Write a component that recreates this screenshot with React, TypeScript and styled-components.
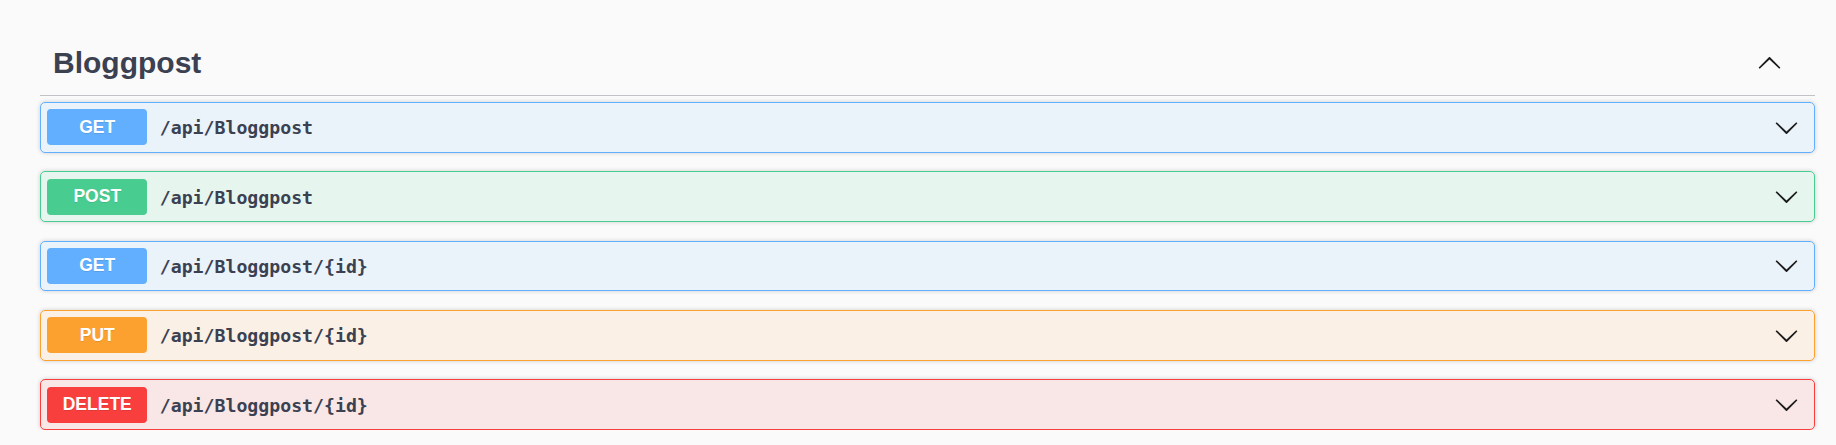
import React from "react";
import styled, { createGlobalStyle } from "styled-components";

const GlobalStyle = createGlobalStyle`
  html, body {
    margin: 0;
    padding: 0;
    background: #fafafa;
  }
  * { box-sizing: border-box; }
`;

type Method = "get" | "post" | "put" | "delete";

const palette: Record<Method, { main: string; bg: string }> = {
  get: { main: "#61affe", bg: "rgba(97,175,254,0.1)" },
  post: { main: "#49cc90", bg: "rgba(73,204,144,0.1)" },
  put: { main: "#fca130", bg: "rgba(252,161,48,0.1)" },
  delete: { main: "#f93e3e", bg: "rgba(249,62,62,0.1)" },
};

const Page = styled.div`
  padding: 0 21px 0 40px;
  font-family: "Liberation Sans", Arial, sans-serif;
  color: #3b4151;
`;

const TagHeader = styled.div`
  display: flex;
  align-items: center;
  padding: 48px 32.6px 16.7px 13px;
  border-bottom: 1px solid rgba(59, 65, 81, 0.3);
  margin-bottom: 6.3px;
`;

const TagTitle = styled.h3`
  flex: 1;
  margin: 0;
  font-size: 30px;
  line-height: 30px;
  font-weight: 700;
  color: #3b4151;
`;

const ArrowIcon = styled.svg<{ $up?: boolean }>`
  width: 25px;
  height: 25px;
  flex: none;
  display: block;
  fill: #1b1b1b;
  transform: ${(p) => (p.$up ? "rotate(180deg)" : "none")};
`;

const OpList = styled.div`
  display: flex;
  flex-direction: column;
  gap: 18.75px;
`;

const OpBlock = styled.div<{ $method: Method }>`
  display: flex;
  align-items: center;
  height: 50.6px;
  padding: 0 14.6px 0 6.25px;
  border: 1.25px solid ${(p) => palette[p.$method].main};
  background: ${(p) => palette[p.$method].bg};
  border-radius: 5px;
  box-shadow: 0 0 4px rgba(0, 0, 0, 0.19);
`;

const MethodBadge = styled.span<{ $method: Method }>`
  flex: none;
  width: 100px;
  height: 36px;
  display: flex;
  align-items: center;
  justify-content: center;
  background: ${(p) => palette[p.$method].main};
  color: #fff;
  border-radius: 4px;
  font-family: "Liberation Sans", Arial, sans-serif;
  font-weight: 700;
  font-size: 17.5px;
  text-shadow: 0 1px 0 rgba(0, 0, 0, 0.1);
`;

const PathText = styled.span`
  flex: 1;
  padding: 1px 12.5px 0;
  font-family: "DejaVu Sans Mono", "Liberation Mono", monospace;
  font-weight: 700;
  font-size: 18.2px;
  color: #3b4151;
`;

const Arrow = ({ up }: { up?: boolean }) => (
  <ArrowIcon $up={up} viewBox="0 0 20 20" aria-hidden="true">
    <path d="M17.418 6.109c.272-.268.709-.268.979 0s.271.701 0 .969l-7.908 7.83c-.27.268-.707.268-.979 0l-7.908-7.830c-.27-.268-.27-.701 0-.969.271-.268.709-.268.979 0L10 13.25l7.418-7.141z" />
  </ArrowIcon>
);

const ops: { method: Method; path: string }[] = [
  { method: "get", path: "/api/Bloggpost" },
  { method: "post", path: "/api/Bloggpost" },
  { method: "get", path: "/api/Bloggpost/{id}" },
  { method: "put", path: "/api/Bloggpost/{id}" },
  { method: "delete", path: "/api/Bloggpost/{id}" },
];

export default function App() {
  return (
    <>
      <GlobalStyle />
      <Page>
        <TagHeader>
          <TagTitle>Bloggpost</TagTitle>
          <Arrow up />
        </TagHeader>
        <OpList>
          {ops.map((op, i) => (
            <OpBlock key={i} $method={op.method}>
              <MethodBadge $method={op.method}>{op.method.toUpperCase()}</MethodBadge>
              <PathText>{op.path}</PathText>
              <Arrow />
            </OpBlock>
          ))}
        </OpList>
      </Page>
    </>
  );
}
